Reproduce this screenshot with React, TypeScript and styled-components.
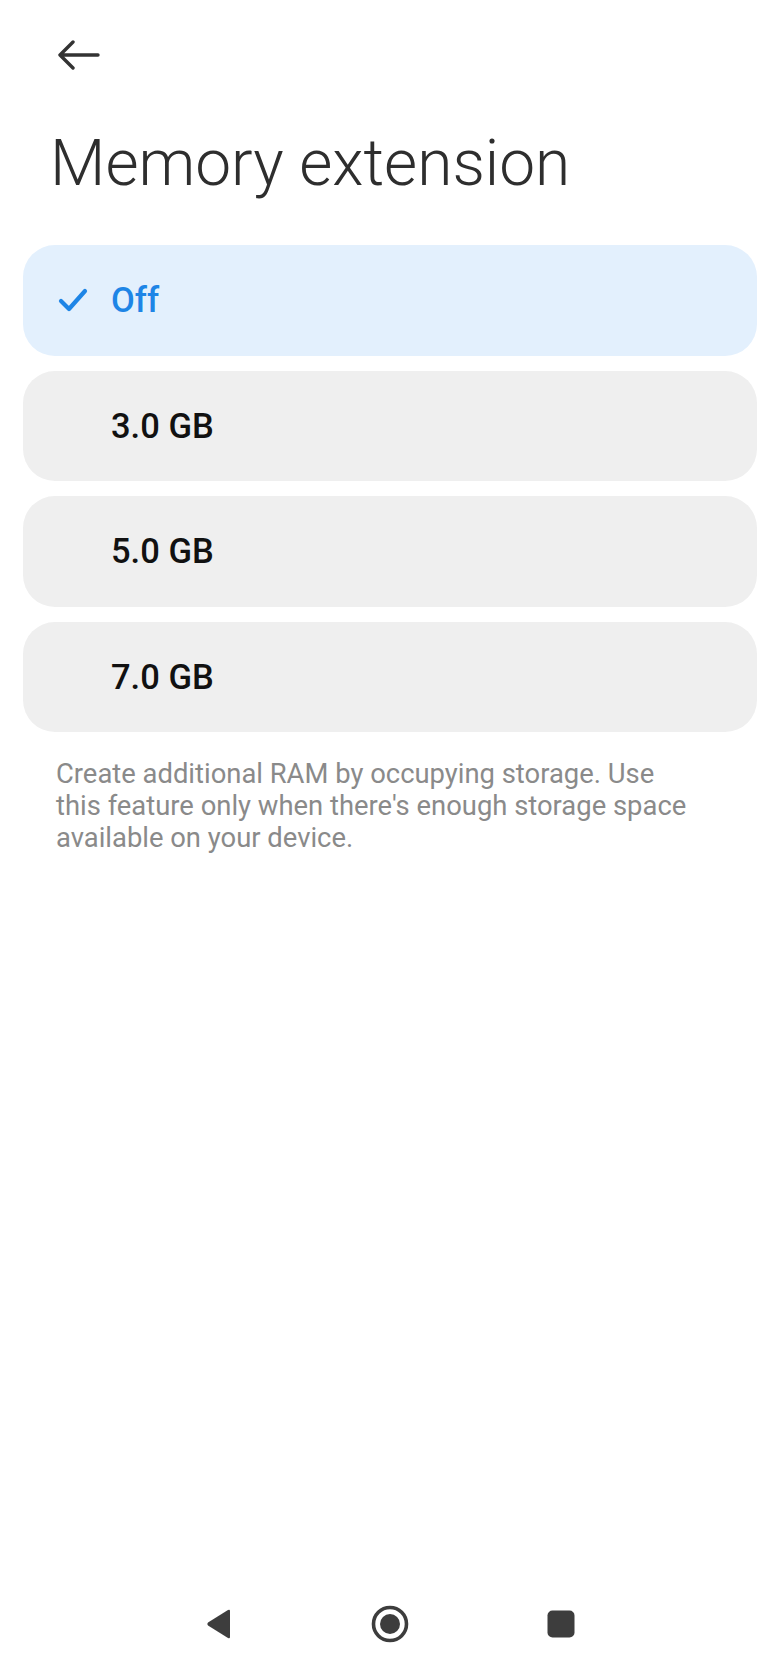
import React, { useState } from 'react'
import styled, { createGlobalStyle } from 'styled-components'

const GlobalStyle = createGlobalStyle`
    html, body {
        margin: 0;
        padding: 0;
        background: #ffffff;
    }
    body {
        font-family: Roboto, "Noto Sans", "Liberation Sans", sans-serif;
        -webkit-font-smoothing: antialiased;
    }
`

const Page = styled.div`
    min-height: 1668px;
    display: flex;
    flex-direction: column;
    background: #fff;
`

const Header = styled.header`
    padding: 40px 0 0 57px;
`

const BackButton = styled.button`
    display: block;
    border: none;
    background: none;
    padding: 0;
    width: 44px;
    height: 30px;
    cursor: pointer;
`

const Title = styled.h1`
    margin: 62px 0 49px 50px;
    font-size: 64px;
    line-height: 64px;
    font-weight: 300;
    color: #2e2e2e;
`

const OptionList = styled.ul`
    list-style: none;
    margin: 0;
    padding: 0 23px;
    display: flex;
    flex-direction: column;
    gap: 15px;
`

const Option = styled.li<{ $selected: boolean }>`
    height: 110.5px;
    border-radius: 32px;
    display: flex;
    align-items: center;
    padding-left: 35px;
    background: ${p => (p.$selected ? '#e3f0fd' : '#efefef')};
    color: ${p => (p.$selected ? '#1e85e6' : '#111111')};
    cursor: pointer;
`

const CheckSlot = styled.span`
    width: 53px;
    height: 30px;
    display: flex;
    align-items: center;
`

const OptionLabel = styled.span`
    font-size: 34.5px;
    font-weight: 500;
`

const Description = styled.p`
    margin: 26px 0 0 56px;
    padding-right: 82px;
    font-size: 27.4px;
    line-height: 32px;
    color: #8a8a8a;
`

const NavBar = styled.nav`
    margin-top: auto;
    height: 88px;
    display: grid;
    grid-template-columns: 1fr 1fr 1fr;
    align-items: center;
    justify-items: center;
    padding: 0 134px;
`

const NavKey = styled.button`
    border: none;
    background: none;
    padding: 0;
    display: flex;
    align-items: center;
    justify-content: center;
`

const CheckIcon = () => (
    <svg width="30" height="26" viewBox="0 0 30 26">
        <path d="M3 14 L11 22 L27 4" fill="none" stroke="#1e85e6" strokeWidth="4.2" strokeLinecap="round" strokeLinejoin="round" />
    </svg>
)

const BackArrow = () => (
    <svg width="44" height="30" viewBox="0 0 44 30">
        <path d="M3 15 H41 M16 2 L3 15 L16 28" fill="none" stroke="#333" strokeWidth="3.4" strokeLinecap="round" strokeLinejoin="round" />
    </svg>
)

const sizes = ['Off', '3.0 GB', '5.0 GB', '7.0 GB']

export default function App() {
    const [selected, setSelected] = useState('Off')

    return (
        <>
            <GlobalStyle />
            <Page>
                <Header>
                    <BackButton aria-label="Back">
                        <BackArrow />
                    </BackButton>
                </Header>
                <Title>Memory extension</Title>
                <OptionList>
                    {sizes.map(s => (
                        <Option key={s} $selected={s === selected} onClick={() => setSelected(s)}>
                            <CheckSlot>{s === selected && <CheckIcon />}</CheckSlot>
                            <OptionLabel>{s}</OptionLabel>
                        </Option>
                    ))}
                </OptionList>
                <Description>
                    Create additional RAM by occupying storage. Use this feature only when there's enough storage space available on your device.
                </Description>
                <NavBar>
                    <NavKey aria-label="Back">
                        <svg width="28" height="32" viewBox="0 0 28 32">
                            <path d="M25 3 L25 29 Q25 31 23 30 L3 17.5 Q1.5 16 3 14.5 L23 2 Q25 1 25 3 Z" fill="#3d3d3d" />
                        </svg>
                    </NavKey>
                    <NavKey aria-label="Home">
                        <svg width="38" height="38" viewBox="0 0 38 38">
                            <circle cx="19" cy="19" r="16.5" fill="none" stroke="#3d3d3d" strokeWidth="3.6" />
                            <circle cx="19" cy="19" r="10" fill="#3d3d3d" />
                        </svg>
                    </NavKey>
                    <NavKey aria-label="Recents">
                        <svg width="28" height="28" viewBox="0 0 28 28">
                            <rect x="0.5" y="0.5" width="27" height="27" rx="5" fill="#3d3d3d" />
                        </svg>
                    </NavKey>
                </NavBar>
            </Page>
        </>
    )
}
